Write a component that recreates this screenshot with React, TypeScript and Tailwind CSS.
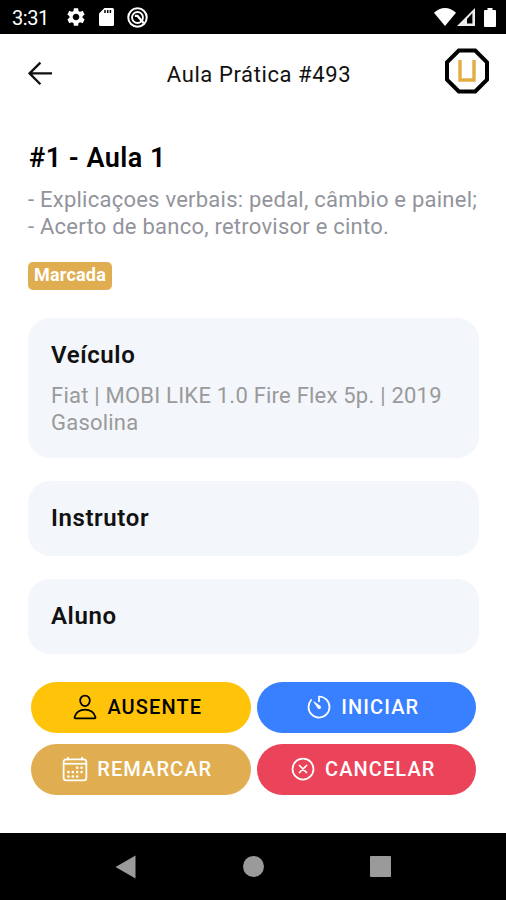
import type { ReactNode } from 'react';
import { IoCalendarOutline, IoCloseCircleOutline, IoPersonOutline, IoTimerOutline } from 'react-icons/io5';
import { MdSettings } from 'react-icons/md';

function StatusBar() {
    return (
        <div className="h-[34px] shrink-0 bg-black flex items-center pl-3 pr-[10px] text-white">
            <span className="text-[20px] leading-[34px] tracking-[-0.4px] w-[53px] pt-px">3:31</span>
            <MdSettings size={22} />
            {/* SD card */}
            <svg width="15" height="18" viewBox="0 0 15 18" className="ml-[12px]">
                <path d="M5.5 0H13.5Q15 0 15 1.5V16.5Q15 18 13.5 18H1.5Q0 18 0 16.5V5.5Z" fill="currentColor" />
                <path d="M6 2V5M8.7 2V5M11.4 2V5" stroke="#000" strokeWidth="1.5" />
            </svg>
            <svg width="21" height="21" viewBox="0 0 20 20" className="ml-[13px]" fill="none" stroke="currentColor">
                <circle cx="10" cy="10" r="8.8" strokeWidth="1.9" />
                <circle cx="10" cy="10" r="5.2" strokeWidth="1.8" />
                <path d="M7.5 8.5H10L16 15.5" strokeWidth="2.2" />
            </svg>
            {/* Wifi, signal, battery */}
            <svg width="22" height="18" viewBox="0 0 22 18" className="ml-auto">
                <path d="M0 4.8Q5 0 11 0T22 4.8L11 18Z" fill="currentColor" />
            </svg>
            <svg width="18" height="18" viewBox="0 0 18 18" className="ml-px">
                <path d="M18 0V18H0Z" fill="#eee" />
                <path d="M15.4 5V15.4H10V11Z" fill="#000" />
            </svg>
            <svg width="12" height="19" viewBox="0 0 12 19" className="ml-[9px]">
                <path d="M3.5 0H8.5V2H11Q12 2 12 3V18Q12 19 11 19H1Q0 19 0 18V3Q0 2 1 2H3.5Z" fill="currentColor" />
            </svg>
        </div>
    );
}

function Header() {
    return (
        <header className="h-[78px] shrink-0 flex items-center justify-between pl-[28px] pr-4">
            <svg width="46" height="24" viewBox="0 0 46 24" fill="none" stroke="#111" strokeWidth="2.3">
                <path d="M12.4 1.6L1.6 12.4L12.4 23.2M1.6 12.4H24" />
            </svg>
            <h1 className="text-[22px] tracking-[0.6px] text-[#111] pt-[2px]">Aula Prática #493</h1>
            <svg width="46" height="46" viewBox="0 0 46 46" fill="none" className="-mt-1">
                <path d="M14.8 2.5H31.2L43 14.3V31.7L31.2 43.5H14.8L3 31.7V14.3Z" stroke="#000" strokeWidth="4" />
                <path d="M16 12V32H30V12" stroke="#e2ad43" strokeWidth="3.4" />
            </svg>
        </header>
    );
}

function Card({ title, children }: { title: string; children?: ReactNode }) {
    return (
        <section className="bg-[#f3f6fa] rounded-[22px] px-[23px] py-[23px]">
            <h3 className="text-[24px] leading-[29px] tracking-[0.6px] font-semibold text-[#111]">{title}</h3>
            {children}
        </section>
    );
}

const actions = [
    { label: 'AUSENTE', icon: IoPersonOutline, style: 'bg-[#ffc409] text-black' },
    { label: 'INICIAR', icon: IoTimerOutline, style: 'bg-[#3880ff] text-white' },
    { label: 'REMARCAR', icon: IoCalendarOutline, style: 'bg-[#e0ae50] text-white' },
    { label: 'CANCELAR', icon: IoCloseCircleOutline, style: 'bg-[#eb445a] text-white' },
];

function NavBar() {
    return (
        <nav className="h-[67px] shrink-0 bg-black flex items-center justify-between px-[115px]">
            <svg width="21" height="24" viewBox="0 0 21 24">
                <path d="M0.5 12L20.5 0.5V23.5Z" fill="#9a9a9a" />
            </svg>
            <div className="w-[21px] h-[21px] rounded-full bg-[#9a9a9a]" />
            <div className="w-[21px] h-[21px] rounded-[1px] bg-[#9a9a9a]" />
        </nav>
    );
}

export default function App() {
    return (
        <div className="w-[506px] h-[900px] bg-white flex flex-col overflow-hidden font-['Roboto',sans-serif]">
            <StatusBar />
            <Header />

            <main className="flex-1 px-[28px] pt-[30px]">
                <h2 className="pl-px text-[27px] leading-[32px] tracking-[0.5px] font-semibold text-black">#1 - Aula 1</h2>
                <p className="mt-3 text-[22px] leading-[27px] tracking-[0.24px] text-[#92949c] whitespace-nowrap">
                    - Explicaçoes verbais: pedal, câmbio e painel;
                    <br />
                    - Acerto de banco, retrovisor e cinto.
                </p>
                <div className="mt-[22px] w-[84px] h-[28px] rounded-[5px] bg-[#e0ae50] text-white text-[18px] leading-[26px] tracking-[0.2px] font-bold text-center">
                    Marcada
                </div>

                <div className="mt-[28px] flex flex-col gap-[23px] w-[451px]">
                    <Card title="Veículo">
                        <p className="mt-[12px] -mb-px text-[22px] leading-[27px] tracking-[0.22px] text-[#9a9a9a] whitespace-nowrap">
                            Fiat | MOBI LIKE 1.0 Fire Flex 5p. | 2019
                            <br />
                            Gasolina
                        </p>
                    </Card>
                    <Card title="Instrutor" />
                    <Card title="Aluno" />
                </div>

                <div className="mt-[28px] ml-[3px] w-[445px] grid grid-cols-2 gap-x-[6px] gap-y-[11px]">
                    {actions.map(({ label, icon: Icon, style }) => (
                        <button
                            key={label}
                            className={`h-[51px] pr-[8px] pb-px rounded-full flex items-center justify-center gap-[8px] text-[20px] font-medium tracking-[1.1px] ${style}`}
                        >
                            <Icon size={28} />
                            <span>{label}</span>
                        </button>
                    ))}
                </div>
            </main>

            <NavBar />
        </div>
    );
}
